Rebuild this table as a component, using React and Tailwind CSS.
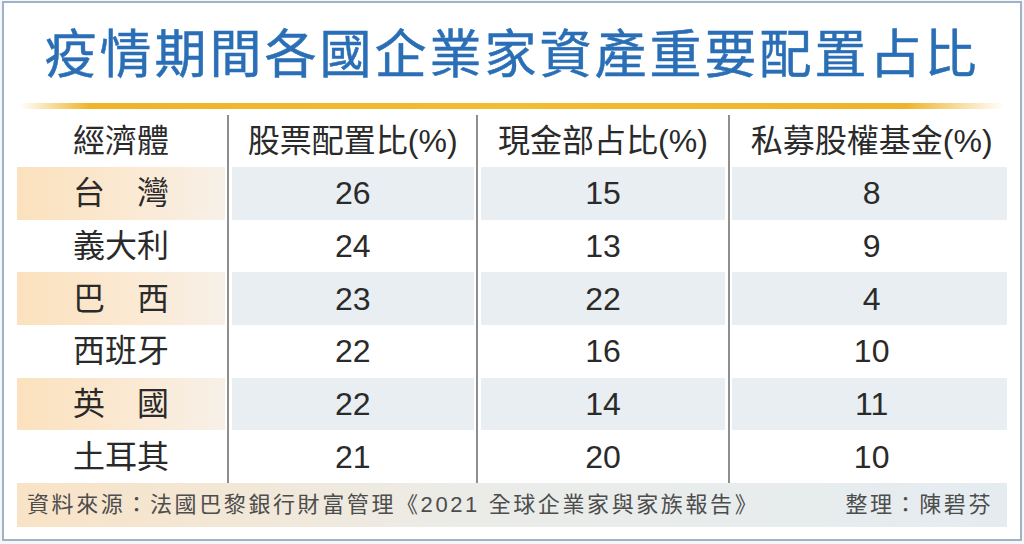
import React from "react";

const rows = [
  { name: "台　灣", a: 26, b: 15, c: 8, striped: true },
  { name: "義大利", a: 24, b: 13, c: 9, striped: false },
  { name: "巴　西", a: 23, b: 22, c: 4, striped: true },
  { name: "西班牙", a: 22, b: 16, c: 10, striped: false },
  { name: "英　國", a: 22, b: 14, c: 11, striped: true },
  { name: "土耳其", a: 21, b: 20, c: 10, striped: false },
];

function Divider() {
  return (
    <div className="w-[7px] flex justify-center bg-white">
      <div className="w-[2px] bg-[#8e8e8e]" />
    </div>
  );
}

function Row({ cells, striped, height }) {
  const first = striped
    ? "bg-[linear-gradient(to_right,#fbe1bd,#fbe9d3_55%,#f7f0e8)]"
    : "bg-white";
  const rest = striped ? "bg-[#e8eef1]" : "bg-white";
  return (
    <div className={`flex ${height}`}>
      <div className={`w-[208px] flex items-center justify-center ${first}`}>{cells[0]}</div>
      <Divider />
      <div className={`w-[242px] flex items-center justify-center ${rest}`}>{cells[1]}</div>
      <Divider />
      <div className={`w-[245px] flex items-center justify-center ${rest}`}>{cells[2]}</div>
      <Divider />
      <div className={`w-[275px] flex items-center justify-center pl-[4px] ${rest}`}>{cells[3]}</div>
    </div>
  );
}

export default function App() {
  return (
    <div
      className="w-[1024px] h-[544px] bg-[#f4f6f8] pt-[1px] px-[2px] pb-[3px]"
      style={{ fontFamily: '"Liberation Sans", "Noto Sans CJK TC", sans-serif' }}
    >
      <div className="h-full border-2 border-[#9fb2c8] bg-white flex flex-col px-[13px]">
        <div className="h-[100px] flex items-center justify-center pt-[4px]">
          <h1 className="text-[52px] leading-none font-normal text-[#2a6fb6] tracking-[3px] [-webkit-text-stroke:0.5px_#2a6fb6]">
            疫情期間各國企業家資產重要配置占比
          </h1>
        </div>
        <div className="mx-[3px] h-[6px] rounded-full bg-[linear-gradient(to_right,rgba(240,180,40,0)_0%,#efb42a_7%,#f2bd2e_50%,#efb42a_90%,rgba(245,200,80,0)_100%)]" />
        <div className="mt-[6px] flex flex-col text-[32px] leading-none text-[#2a2a2a]">
          <Row
            height="h-[52px]"
            striped={false}
            cells={["經濟體", "股票配置比(%)", "現金部占比(%)", "私募股權基金(%)"]}
          />
          {rows.map((r) => (
            <Row
              key={r.name}
              height="h-[52.7px]"
              striped={r.striped}
              cells={[r.name, r.a, r.b, r.c]}
            />
          ))}
          <div className="h-[44px] flex items-center justify-between pl-[10px] pr-[14px] text-[22px] tracking-[2.6px] text-[#4d4d4d] bg-[linear-gradient(to_right,#f9e3c6,#ebece8_45%,#e5ecf0)]">
            <span>資料來源：法國巴黎銀行財富管理《2021 全球企業家與家族報告》</span>
            <span>整理：陳碧芬</span>
          </div>
        </div>
      </div>
    </div>
  );
}
